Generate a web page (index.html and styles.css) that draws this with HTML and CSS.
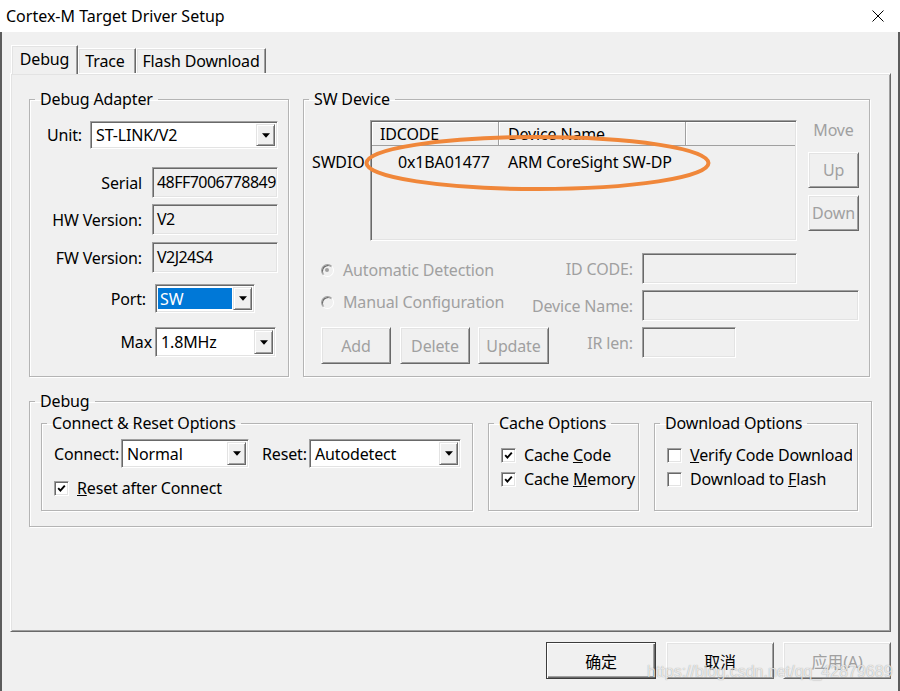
FILE: index.html
```html
<!DOCTYPE html>
<html lang="en">
<head>
  <meta charset="UTF-8">
  <title>Cortex-M Target Driver Setup</title>
  <link rel="stylesheet" href="styles.css">
</head>
<body>
  <div class="window">
    <div class="titlebar">
      <span class="title">Cortex-M Target Driver Setup</span>
      <svg class="close" width="12" height="12" viewBox="0 0 12 12">
        <path d="M0.5 0.5 L11.5 11.5 M11.5 0.5 L0.5 11.5" stroke="#000" stroke-width="1" fill="none"/>
      </svg>
    </div>

    <div class="client">
      <div class="tabs">
        <div class="tab active w_debug">Debug</div>
        <div class="tab w_trace">Trace</div>
        <div class="tab w_flash">Flash Download</div>
      </div>

      <div class="panel">
        <div class="top_row">
          <!-- debug adapter -->
          <fieldset class="group adapter">
            <legend>Debug Adapter</legend>
            <div class="adapter_body">
              <div class="frow r_unit">
                <span>Unit:</span>
                <div class="combo w_unit">
                  <span class="combo_text">ST-LINK/V2</span>
                  <span class="combo_btn"><svg width="7" height="4" viewBox="0 0 7 4"><polygon points="0,0 7,0 3.5,4" fill="#000"/></svg></span>
                </div>
              </div>
              <div class="frow r_serial">
                <span>Serial</span>
                <div class="field w_info">48FF7006778849</div>
              </div>
              <div class="frow r_hw">
                <span>HW Version:</span>
                <div class="field w_info">V2</div>
              </div>
              <div class="frow r_fw">
                <span>FW Version:</span>
                <div class="field w_info">V2J24S4</div>
              </div>
              <div class="frow r_port">
                <span>Port:</span>
                <div class="combo w_port">
                  <span class="combo_text"><span class="sel">SW</span></span>
                  <span class="combo_btn"><svg width="7" height="4" viewBox="0 0 7 4"><polygon points="0,0 7,0 3.5,4" fill="#000"/></svg></span>
                </div>
              </div>
              <div class="frow r_max">
                <span>Max</span>
                <div class="combo w_max">
                  <span class="combo_text">1.8MHz</span>
                  <span class="combo_btn"><svg width="7" height="4" viewBox="0 0 7 4"><polygon points="0,0 7,0 3.5,4" fill="#000"/></svg></span>
                </div>
              </div>
            </div>
          </fieldset>

          <!-- sw device -->
          <fieldset class="group swdev">
            <legend>SW Device</legend>
            <div class="sw_top">
              <div class="swdio">SWDIO</div>
              <div class="list_wrap">
                <div class="list">
                  <div class="list_head">
                    <div class="hcol c1">IDCODE</div>
                    <div class="hcol c2">Device Name</div>
                    <div class="hcol c3"></div>
                  </div>
                  <div class="list_row">
                    <span class="c1">0x1BA01477</span>
                    <span class="c2">ARM CoreSight SW-DP</span>
                  </div>
                </div>
                <svg class="mark" width="347" height="58" viewBox="0 0 347 58">
                  <ellipse cx="173.5" cy="29" rx="171" ry="26" fill="none" stroke="#f0873a" stroke-width="4"/>
                </svg>
              </div>
              <div class="move">
                <div class="move_label">Move</div>
                <button type="button" class="btn move_btn" disabled>Up</button>
                <button type="button" class="btn move_btn down" disabled>Down</button>
              </div>
            </div>
            <div class="sw_bottom">
              <div class="sw_left">
                <div class="radio_row r1"><span class="radio checked"></span>Automatic Detection</div>
                <div class="radio_row r2"><span class="radio"></span>Manual Configuration</div>
                <div class="sw_btns">
                  <button type="button" class="btn w_add" disabled>Add</button>
                  <button type="button" class="btn w_add" disabled>Delete</button>
                  <button type="button" class="btn w_upd" disabled>Update</button>
                </div>
              </div>
              <div class="sw_right">
                <span class="off">ID CODE:</span>
                <div class="field w_id"></div>
                <span class="off">Device Name:</span>
                <div class="field w_name"></div>
                <span class="off">IR len:</span>
                <div class="field w_ir"></div>
              </div>
            </div>
          </fieldset>
        </div>

        <!-- debug -->
        <fieldset class="group debug">
          <legend>Debug</legend>
          <div class="debug_body">
            <fieldset class="group connect">
              <legend>Connect &amp; Reset Options</legend>
              <div class="conn_row">
                <span>Connect:</span>
                <div class="combo">
                  <span class="combo_text">Normal</span>
                  <span class="combo_btn"><svg width="7" height="4" viewBox="0 0 7 4"><polygon points="0,0 7,0 3.5,4" fill="#000"/></svg></span>
                </div>
                <span class="reset_label">Reset:</span>
                <div class="combo">
                  <span class="combo_text">Autodetect</span>
                  <span class="combo_btn"><svg width="7" height="4" viewBox="0 0 7 4"><polygon points="0,0 7,0 3.5,4" fill="#000"/></svg></span>
                </div>
              </div>
              <div class="check_row conn_check">
                <span class="check on"><svg width="9" height="9" viewBox="0 0 9 9"><polyline points="1.2,4.2 3.4,6.6 7.8,1.6" fill="none" stroke="#000" stroke-width="1.9"/></svg></span>
                <span><u>R</u>eset after Connect</span>
              </div>
            </fieldset>

            <fieldset class="group cache">
              <legend>Cache Options</legend>
              <div class="check_row first">
                <span class="check on"><svg width="9" height="9" viewBox="0 0 9 9"><polyline points="1.2,4.2 3.4,6.6 7.8,1.6" fill="none" stroke="#000" stroke-width="1.9"/></svg></span>
                <span>Cache <u>C</u>ode</span>
              </div>
              <div class="check_row">
                <span class="check on"><svg width="9" height="9" viewBox="0 0 9 9"><polyline points="1.2,4.2 3.4,6.6 7.8,1.6" fill="none" stroke="#000" stroke-width="1.9"/></svg></span>
                <span>Cache <u>M</u>emory</span>
              </div>
            </fieldset>

            <fieldset class="group download">
              <legend>Download Options</legend>
              <div class="check_row first">
                <span class="check"></span>
                <span><u>V</u>erify Code Download</span>
              </div>
              <div class="check_row">
                <span class="check"></span>
                <span>Download to <u>F</u>lash</span>
              </div>
            </fieldset>
          </div>
        </fieldset>
      </div>

      <div class="dlg_btns">
        <button type="button" class="btn dlg default">确定</button>
        <button type="button" class="btn dlg">取消</button>
        <button type="button" class="btn dlg" disabled>应用(A)</button>
      </div>
    </div>

    <span class="watermark">https://blog.csdn.net/qq_42879689</span>
  </div>
</body>
</html>
```

FILE: styles.css
```css
:root {
  /* win classic colors */
  --face: #f0f0f0;
  --light: #e3e3e3;
  --shadow: #a0a0a0;
  --dark: #696969;
  --gray_text: #a0a0a0;
}

* {
  box-sizing: border-box;
}

body {
  margin: 0;
  width: 900px;
  height: 691px;
  overflow: hidden;
  background: #fff;
  color: #000;
  font-family: "Noto Sans", "Noto Sans CJK SC", sans-serif;
  font-size: 16px;
  line-height: 20px;
  letter-spacing: -0.15px;
}

button {
  font-family: inherit;
  font-size: 16px;
  letter-spacing: inherit;
  color: #000;
  padding: 0;
  background: var(--face);
}

.window {
  position: relative;
  height: 691px;
}

/* title bar */
.titlebar {
  height: 32px;
  display: flex;
  align-items: center;
  justify-content: space-between;
  padding: 0 16px 0 6px;
  background: #fff;
  letter-spacing: 0;
}

.close {
  display: block;
}

.client {
  height: 659px;
  padding: 13px 7px 0 8px;
  border-left: 2px solid #5c5c5c;
  border-right: 2px solid #5c5c5c;
  background: var(--face);
}

/* tabs */
.tabs {
  display: flex;
  align-items: flex-end;
  height: 28px;
  padding-left: 1px;
}

.tab {
  height: 25px;
  line-height: 24px;
  text-align: center;
  border-top: 1px solid #fff;
  border-left: 1px solid #fff;
  border-right: 1px solid var(--dark);
  box-shadow: inset -1px 0 var(--shadow), inset 1px 1px var(--light);
  background: var(--face);
}

.tab.active {
  position: relative;
  z-index: 1;
  height: 29px;
  line-height: 26px;
  margin-bottom: -1px;
}

.w_debug { width: 67px; }
.w_trace { width: 58px; padding-right: 4px; }
.w_flash { width: 130px; }

.panel {
  height: 559px;
  padding: 15px 18px 0 18px;
  border: 1px solid;
  border-color: #fff var(--dark) var(--dark) #fff;
  box-shadow: inset 1px 1px var(--light), inset -1px -1px var(--shadow);
}

/* group boxes */
.group {
  margin: 0;
  padding: 0;
  min-width: 0;
  border: 1px solid #b4b4b4;
  box-shadow: inset 1px 1px #fff, 1px 1px #fff;
}

.group legend {
  margin-left: 5px;
  padding: 0 5px;
  height: 20px;
  line-height: 20px;
  white-space: nowrap;
}

.top_row {
  display: grid;
  grid-template-columns: 260px 1fr;
  gap: 14px;
  margin-right: 2px;
  margin-bottom: 14px;
}

/* debug adapter */
.adapter_body {
  padding: 12px 10px 0 0;
}

.frow {
  display: flex;
  justify-content: flex-end;
  align-items: center;
  white-space: nowrap;
}

.r_unit { height: 28px; gap: 8px; }
.r_serial { height: 31px; gap: 10px; margin-top: 18px; }
.r_hw { height: 31px; gap: 10px; margin-top: 6px; }
.r_fw { height: 31px; gap: 10px; margin-top: 7px; }
.r_port { height: 29px; gap: 9px; margin-top: 11px; padding-right: 23px; }
.r_max { height: 30px; gap: 3px; margin-top: 14px; padding-right: 2px; }

.field {
  height: 100%;
  padding: 4px 0 0 4px;
  overflow: hidden;
  white-space: nowrap;
  letter-spacing: -0.55px;
  border: 1px solid;
  border-color: var(--shadow) #fff #fff var(--shadow);
  box-shadow: inset 1px 1px var(--dark), inset -1px -1px var(--light);
  background: var(--face);
}

.w_info { width: 126px; }

.combo {
  display: flex;
  height: 100%;
  padding: 2px;
  border: 1px solid;
  border-color: var(--shadow) #fff #fff var(--shadow);
  box-shadow: inset 1px 1px var(--dark), inset -1px -1px var(--light);
  background: #fff;
}

.combo_text {
  flex: 1;
  display: flex;
  align-items: center;
  padding-left: 3px;
  white-space: nowrap;
  overflow: hidden;
}

.combo_btn {
  flex: none;
  width: 19px;
  display: flex;
  align-items: center;
  justify-content: center;
  border: 1px solid;
  border-color: var(--light) var(--dark) var(--dark) var(--light);
  box-shadow: inset 1px 1px #fff, inset -1px -1px var(--shadow);
  background: var(--face);
}

.combo_btn svg {
  display: block;
  width: 8px;
  height: 5px;
}

.w_unit { width: 188px; }
.w_port { width: 100px; }
.w_max { width: 121px; }

.w_port .combo_text {
  padding: 1px 1px 1px 0;
}

.sel {
  display: flex;
  align-items: center;
  width: 100%;
  height: 100%;
  padding-left: 2px;
  background: #0078d7;
  color: #fff;
}

/* sw device */
.sw_top {
  display: flex;
  margin-top: 11px;
  padding: 0 10px 0 8px;
}

.swdio {
  width: 58px;
  padding-top: 32px;
}

.list_wrap {
  position: relative;
  width: 427px;
  height: 121px;
}

.list {
  height: 100%;
  border: 1px solid;
  border-color: var(--shadow) #fff #fff var(--shadow);
  box-shadow: inset 1px 1px var(--dark), inset -1px -1px var(--light);
  padding: 1px;
  background: var(--face);
}

.list_head {
  display: flex;
  height: 24px;
}

.hcol {
  height: 24px;
  line-height: 24px;
  border-right: 1px solid var(--shadow);
  border-bottom: 1px solid var(--shadow);
  box-shadow: inset 1px 1px #fff;
}

.list_head .c1 { width: 127px; padding-left: 8px; }
.list_head .c2 { width: 187px; padding-left: 9px; }
.list_head .c3 { flex: 1; border-right: 0; }

.list_row {
  display: flex;
  margin-top: 6px;
  white-space: nowrap;
}

.list_row .c1 { width: 127px; padding-left: 26px; }
.list_row .c2 { padding-left: 9px; }

.mark {
  position: absolute;
  left: -6px;
  top: 14px;
  overflow: visible;
}

.move {
  width: 51px;
  margin-left: 11px;
  display: flex;
  flex-direction: column;
}

.move_label {
  text-align: center;
  color: var(--gray_text);
}

.btn {
  border: 1px solid;
  border-color: #fff var(--dark) var(--dark) #fff;
  box-shadow: inset 1px 1px var(--light), inset -1px -1px var(--shadow);
  background: var(--face);
  cursor: pointer;
}

.btn:disabled {
  color: var(--gray_text);
  cursor: default;
}

.move_btn {
  height: 36px;
  margin-top: 12px;
}

.move_btn.down {
  margin-top: 7px;
}

.sw_bottom {
  display: flex;
  justify-content: space-between;
  padding: 0 10px 12px 17px;
}

.sw_left {
  flex: 0 1 auto;
  min-width: 0;
}

.radio_row {
  display: flex;
  align-items: center;
  gap: 9px;
  height: 20px;
  white-space: nowrap;
  color: var(--gray_text);
}

.radio_row.r1 { margin-top: 19px; }
.radio_row.r2 { margin-top: 12px; }

.radio {
  position: relative;
  flex: none;
  width: 13px;
  height: 13px;
  border-radius: 50%;
  border: 1px solid;
  border-color: var(--shadow) #fff #fff var(--shadow);
  box-shadow: inset 1px 1px var(--dark);
  background: var(--face);
}

.radio.checked::after {
  content: "";
  position: absolute;
  left: 3px;
  top: 3px;
  width: 4px;
  height: 4px;
  border-radius: 50%;
  background: var(--gray_text);
}

.sw_btns {
  display: flex;
  gap: 9px;
  margin-top: 15px;
}

.sw_btns .btn {
  flex: none;
  height: 37px;
}

.w_add { width: 70px; }
.w_upd { width: 71px; margin-left: -1px; }

.sw_right {
  flex: none;
  display: grid;
  grid-template-columns: auto 217px;
  grid-auto-rows: 31px;
  column-gap: 9px;
  row-gap: 6px;
  align-items: center;
  margin-top: 12px;
}

.sw_right .off {
  justify-self: end;
  white-space: nowrap;
  color: var(--gray_text);
}

.w_id { width: 155px; }
.w_name { width: 217px; }
.w_ir { width: 94px; }

/* debug options */
.debug_body {
  display: flex;
  align-items: stretch;
  gap: 15px;
  padding: 2px 0 15px 11px;
}

.connect { width: 432px; padding: 0 0 12px 12px; }
.cache { width: 151px; padding: 0 0 0 12px; }
.download { width: 204px; padding: 0 5px 0 12px; }

.connect legend,
.cache legend,
.download legend {
  margin-left: -7px;
}

.conn_row {
  display: grid;
  grid-template-columns: 67px 128px 60px 152px;
  align-items: center;
  height: 29px;
  margin-top: 6px;
  white-space: nowrap;
}

.conn_row .combo {
  height: 29px;
}

.reset_label {
  margin-left: 13px;
}

.check_row {
  display: flex;
  align-items: center;
  gap: 8px;
  height: 20px;
  margin-top: 4px;
  white-space: nowrap;
  overflow: hidden;
}

.check_row.first {
  margin-top: 12px;
}

.check_row.conn_check {
  margin-top: 10px;
}

.check {
  flex: none;
  display: flex;
  align-items: center;
  justify-content: center;
  width: 15px;
  height: 15px;
  border: 1px solid;
  border-color: var(--shadow) #fff #fff var(--shadow);
  box-shadow: inset 1px 1px var(--dark), inset -1px -1px var(--light);
  background: #fff;
}

.check svg {
  display: block;
}

/* dialog buttons */
.dlg_btns {
  display: flex;
  justify-content: flex-end;
  gap: 9px;
  margin-top: 10px;
}

.dlg {
  width: 108px;
  height: 37px;
}

.dlg.default {
  width: 110px;
  margin-right: 1px;
  border: 1px solid #3c3c3c;
  box-shadow: inset 1px 1px #fff, inset -1px -1px var(--dark), inset -2px -2px var(--shadow);
}

.watermark {
  position: absolute;
  left: 647px;
  top: 662px;
  font-family: "Liberation Sans", Arial, sans-serif;
  font-size: 16px;
  letter-spacing: 0;
  color: rgba(255, 255, 255, 0.75);
  text-shadow: 0 0 1px rgba(0, 0, 0, 0.4);
  pointer-events: none;
}
```
